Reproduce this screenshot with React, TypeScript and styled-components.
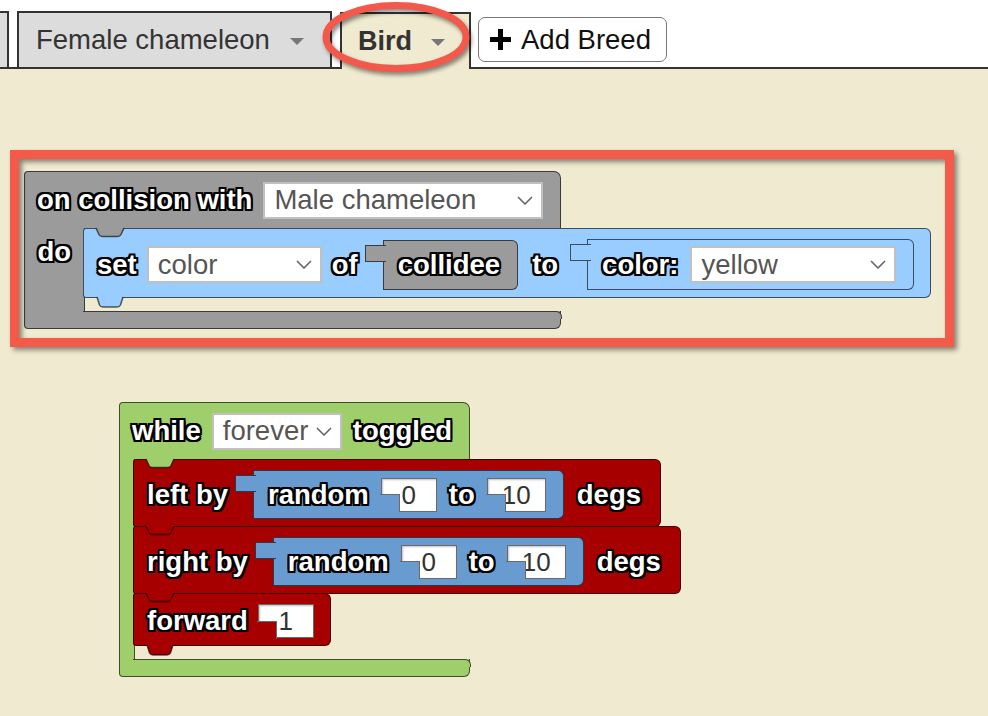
import React from 'react';
import styled, { createGlobalStyle } from 'styled-components';

const BEIGE = '#f0ead0';
const EDGE = 'rgba(0, 0, 0, 0.62)';

const palette = {
  grey: '#9b9b9b',
  sky: '#99ccff',
  green: '#9ecf6a',
  red: '#a60000',
  blue: '#689bd0',
};

const GlobalStyle = createGlobalStyle`
  html, body {
    margin: 0;
    padding: 0;
  }
  body {
    background: ${BEIGE};
    font-family: "Liberation Sans", Arial, sans-serif;
  }
  * {
    box-sizing: border-box;
  }
`;

const Page = styled.div`
  position: relative;
  width: 988px;
  height: 716px;
  overflow: hidden;
  display: flex;
  flex-direction: column;
`;

/* ---------- breed tabs ---------- */

const TabBar = styled.div`
  flex-shrink: 0;
  display: flex;
  align-items: flex-end;
  height: 69px;
  background: #fff;
  border-bottom: 2px solid #333;
`;

const PartialTab = styled.div`
  width: 9px;
  height: 56px;
  background: #dcdcdc;
  border-top: 2px solid #333;
  border-right: 2px solid #333;
`;

const Tab = styled.div<{ $active?: boolean; $width: number }>`
  display: flex;
  align-items: center;
  gap: ${p => (p.$active ? 19 : 20)}px;
  width: ${p => p.$width}px;
  height: ${p => (p.$active ? 57 : 56)}px;
  margin-left: 8px;
  margin-bottom: ${p => (p.$active ? -2 : 0)}px;
  padding-left: ${p => (p.$active ? 16 : 17)}px;
  background: ${p => (p.$active ? BEIGE : '#dcdcdc')};
  border: 2px solid #333;
  border-bottom: none;
  font-size: ${p => (p.$active ? 27 : 27.5)}px;
  line-height: 1;
  color: #333;
  font-weight: ${p => (p.$active ? 700 : 400)};
  white-space: nowrap;
`;

const Caret = styled.span`
  width: 0;
  height: 0;
  margin-top: 2px;
  border-left: 7px solid transparent;
  border-right: 7px solid transparent;
  border-top: 7px solid #777;
`;

const AddBreedButton = styled.button`
  align-self: flex-start;
  display: flex;
  align-items: center;
  gap: 10px;
  width: 189px;
  height: 45px;
  margin: 17px 0 0 7px;
  padding: 0 0 0 11px;
  background: #fff;
  border: 1.5px solid #777;
  border-radius: 7px;
  font-family: inherit;
  font-size: 27.5px;
  line-height: 1;
  color: #111;
  white-space: nowrap;
`;

/* ---------- workspace ---------- */

const Workspace = styled.div`
  position: relative;
  flex: 1;
  background: ${BEIGE};
`;

const Placed = styled.div<{ $x: number; $y: number }>`
  position: absolute;
  left: ${p => p.$x}px;
  top: ${p => p.$y}px;
`;

const Highlight = styled.div`
  position: absolute;
  left: 10px;
  top: 81px;
  width: 944px;
  height: 197px;
  border: 9px solid #f45a4a;
  box-shadow: 3px 3px 5px rgba(0, 0, 0, 0.45), inset 3px 3px 5px rgba(0, 0, 0, 0.45);
  pointer-events: none;
`;

const Ellipse = styled.svg`
  position: absolute;
  left: 318px;
  top: 0;
  width: 160px;
  height: 76px;
  overflow: visible;
  filter: drop-shadow(2px 3px 2px rgba(0, 0, 0, 0.45));
  pointer-events: none;
`;

/* ---------- blocks ---------- */

const Label = styled.span<{ $space?: number }>`
  margin-left: ${p => p.$space ?? 0}px;
  margin-right: ${p => p.$space ?? 0}px;
  font-size: 27.5px;
  font-weight: 700;
  line-height: 1;
  color: #fff;
  white-space: nowrap;
  text-shadow:
    -2px -2px 0 #000, 2px -2px 0 #000, -2px 2px 0 #000, 2px 2px 0 #000,
    0 -2px 0 #000, 0 2px 0 #000, -2px 0 0 #000, 2px 0 0 #000;
`;

const CBlock = styled.div`
  display: inline-flex;
  flex-direction: column;
`;

const CHeader = styled.div<{ $color: string }>`
  display: flex;
  align-items: center;
  gap: 11px;
  height: 57px;
  padding: 0 17px 0 12px;
  background: ${p => p.$color};
  border: 1.5px solid ${EDGE};
  border-bottom: none;
  border-radius: 4px 7px 0 0;
`;

const CBody = styled.div`
  display: flex;
  width: 0;
`;

const CArm = styled.div<{ $color: string; $width: number }>`
  flex-shrink: 0;
  width: ${p => p.$width}px;
  padding: 10px 0 0 12.5px;
  background: ${p => p.$color};
  border-left: 1.5px solid ${EDGE};
  border-right: 1.5px solid ${EDGE};
`;

const CSlot = styled.div`
  flex-shrink: 0;
  display: flex;
  flex-direction: column;
  margin-left: -1.5px;
  padding-bottom: 13px;
`;

const CFooter = styled.div<{ $color: string; $arm: number }>`
  position: relative;
  height: 18px;
  background: ${p => p.$color};
  border: 1.5px solid ${EDGE};
  border-top: none;
  border-radius: 0 0 6px 4px;

  &::before {
    content: '';
    position: absolute;
    top: 0;
    left: ${p => p.$arm - 3}px;
    right: 3px;
    border-top: 1.5px solid ${EDGE};
  }

  &::after {
    content: '';
    position: absolute;
    top: 0;
    right: -1.5px;
    width: 7px;
    height: 7px;
    border-top: 1.5px solid ${EDGE};
    border-right: 1.5px solid ${EDGE};
    border-top-right-radius: 6px;
    background: ${p => p.$color};
  }
`;

const StatementShell = styled.div<{ $color: string }>`
  position: relative;
  align-self: flex-start;
  display: flex;
  align-items: center;
  gap: 10px;
  padding: 10px 16px 7px 13px;
  background: ${p => p.$color};
  border: 1.5px solid ${EDGE};
  border-radius: 3px 6px 6px 3px;

  & + & {
    margin-top: -1px;
  }
`;

const ConnectorSvg = styled.svg<{ $tail?: boolean }>`
  position: absolute;
  left: 12px;
  width: 28px;
  overflow: visible;
  ${p => (p.$tail ? 'top: calc(100% - 0.5px); height: 11px;' : 'top: -1.5px; height: 9px;')}
`;

const notchPath = 'M0 0 L3 6.5 Q4 8.5 6.5 8.5 L21.5 8.5 Q24 8.5 25 6.5 L28 0';
const tailPath = 'M1 0 L3.5 8 Q4.5 10 7 10 L21 10 Q23.5 10 24.5 8 L27 0';

function Connector({ fill, tail }: { fill: string; tail?: boolean }) {
  const d = tail ? tailPath : notchPath;
  return (
    <ConnectorSvg $tail={tail} viewBox={tail ? '0 0 28 11' : '0 0 28 9'}>
      <path d={`${d} Z`} fill={fill} />
      <path d={d} fill="none" stroke={EDGE} strokeWidth="1.5" />
    </ConnectorSvg>
  );
}

function Statement({
  color,
  notch,
  tail,
  children,
}: {
  color: string;
  notch: string;
  tail?: boolean;
  children: React.ReactNode;
}) {
  return (
    <StatementShell $color={color}>
      <Connector fill={notch} />
      {children}
      {tail && <Connector fill={color} tail />}
    </StatementShell>
  );
}

const Reporter = styled.div<{ $color: string; $height: number; $gap?: number }>`
  position: relative;
  flex-shrink: 0;
  display: flex;
  align-items: center;
  gap: ${p => p.$gap ?? 12}px;
  height: ${p => p.$height}px;
  margin-left: 15px;
  padding: 0 17px 0 14px;
  background: ${p => p.$color};
  border: 1.5px solid ${EDGE};
  border-radius: 0 6px 6px 0;

  &::before {
    content: '';
    position: absolute;
    left: -18.5px;
    top: 4px;
    width: 20px;
    height: 15px;
    background: inherit;
    border: 1.5px solid ${EDGE};
    border-right: none;
  }
`;

const NumberField = styled.div<{ $width: number; $cut: string }>`
  position: relative;
  flex-shrink: 0;
  display: flex;
  align-items: center;
  justify-content: center;
  width: ${p => p.$width}px;
  height: 34px;
  background: #fff;
  border: 1.5px solid #6a6a6a;
  box-shadow: inset 1px 1px 2px rgba(0, 0, 0, 0.25);
  font-size: 26px;
  line-height: 1;
  color: #333;

  &::after {
    content: '';
    position: absolute;
    left: -1.5px;
    bottom: -1.5px;
    width: 18.5px;
    height: 17px;
    background: ${p => p.$cut};
    border-top: 1.5px solid #6a6a6a;
    border-right: 1.5px solid #6a6a6a;
  }
`;

const DropdownBox = styled.div<{ $width: number }>`
  flex-shrink: 0;
  display: flex;
  align-items: center;
  justify-content: space-between;
  width: ${p => p.$width}px;
  height: 37px;
  padding: 0 8px 0 9px;
  background: #fff;
  border: 2px solid #c0c0c0;
  font-size: 27.5px;
  line-height: 1;
  color: #555;
  white-space: nowrap;
`;

function Dropdown({ value, width }: { value: string; width: number }) {
  return (
    <DropdownBox $width={width}>
      <span>{value}</span>
      <svg width="16" height="9" viewBox="0 0 16 9">
        <polyline points="1,1 8,8 15,1" fill="none" stroke="#666" strokeWidth="1.6" />
      </svg>
    </DropdownBox>
  );
}

function RandomRange({ cut }: { cut: string }) {
  return (
    <Reporter $color={palette.blue} $height={49}>
      <Label>random</Label>
      <NumberField $width={56} $cut={cut}>0</NumberField>
      <Label>to</Label>
      <NumberField $width={59} $cut={cut}>10</NumberField>
    </Reporter>
  );
}

export default function App() {
  return (
    <>
      <GlobalStyle />
      <Page>
        <TabBar>
          <PartialTab />
          <Tab $width={315}>
            Female chameleon
            <Caret />
          </Tab>
          <Tab $active $width={131}>
            Bird
            <Caret />
          </Tab>
          <AddBreedButton>
            <svg width="21" height="21" viewBox="0 0 21 21">
              <path d="M8 0h5v8h8v5h-8v8H8v-8H0V8h8z" fill="#000" />
            </svg>
            Add Breed
          </AddBreedButton>
        </TabBar>

        <Workspace>
          <Placed $x={24} $y={102}>
            <CBlock>
              <CHeader $color={palette.grey}>
                <Label>on collision with</Label>
                <Dropdown value="Male chameleon" width={280} />
              </CHeader>
              <CBody>
                <CArm $color={palette.grey} $width={60.5}>
                  <Label>do</Label>
                </CArm>
                <CSlot>
                  <Statement color={palette.sky} notch={palette.grey} tail>
                    <Label>set</Label>
                    <Dropdown value="color" width={175} />
                    <Label>of</Label>
                    <Reporter $color={palette.grey} $height={50} $gap={0}>
                      <Label>collidee</Label>
                    </Reporter>
                    <Label $space={4}>to</Label>
                    <Reporter $color={palette.sky} $height={51}>
                      <Label>color:</Label>
                      <Dropdown value="yellow" width={206} />
                    </Reporter>
                  </Statement>
                </CSlot>
              </CBody>
              <CFooter $color={palette.grey} $arm={60.5} />
            </CBlock>
          </Placed>

          <Highlight />

          <Placed $x={119} $y={333}>
            <CBlock>
              <CHeader $color={palette.green}>
                <Label>while</Label>
                <Dropdown value="forever" width={130} />
                <Label>toggled</Label>
              </CHeader>
              <CBody>
                <CArm $color={palette.green} $width={15.5} />
                <CSlot>
                  <Statement color={palette.red} notch={palette.green}>
                    <Label>left by</Label>
                    <RandomRange cut={palette.blue} />
                    <Label $space={3}>degs</Label>
                  </Statement>
                  <Statement color={palette.red} notch={palette.red}>
                    <Label>right by</Label>
                    <RandomRange cut={palette.blue} />
                    <Label $space={3}>degs</Label>
                  </Statement>
                  <Statement color={palette.red} notch={palette.red} tail>
                    <Label>forward</Label>
                    <NumberField $width={56} $cut={palette.red}>1</NumberField>
                  </Statement>
                </CSlot>
              </CBody>
              <CFooter $color={palette.green} $arm={15.5} />
            </CBlock>
          </Placed>
        </Workspace>

        <Ellipse viewBox="0 0 160 76">
          <ellipse cx="78" cy="37" rx="70" ry="31.5" fill="none" stroke="#f2594b" strokeWidth="7" />
        </Ellipse>
      </Page>
    </>
  );
}
